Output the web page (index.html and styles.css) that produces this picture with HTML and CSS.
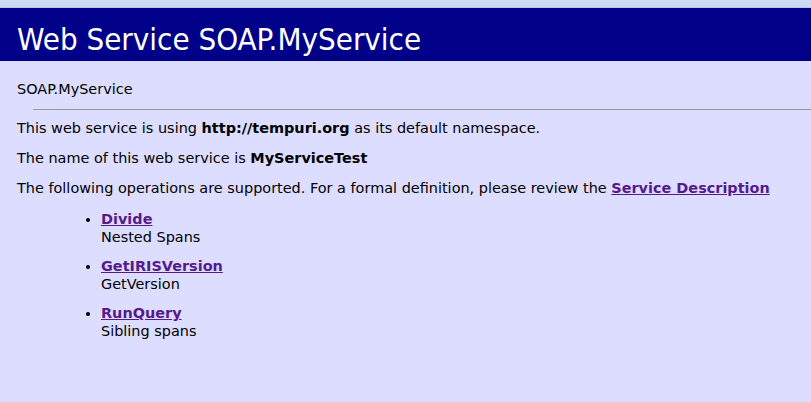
FILE: index.html
```html
<!DOCTYPE html>
<html>
<head>
<meta charset="utf-8">
<title>Web Service SOAP.MyService</title>
<link rel="stylesheet" href="styles.css">
</head>
<body>
<div class="topstrip"></div>
<div class="header"><h1 class="title">Web Service SOAP.MyService</h1></div>
<div class="content">
  <p class="cls">SOAP.MyService</p>
  <hr class="rule">
  <p class="para">This web service is using <b>http://tempuri.org</b> as its default namespace.</p>
  <p class="para">The name of this web service is <b>MyServiceTest</b></p>
  <p class="para">The following operations are supported. For a formal definition, please review the <a class="link" href="#">Service Description</a></p>
  <ul class="ops">
    <li class="op"><a class="link" href="#">Divide</a><br>Nested Spans</li>
    <li class="op"><a class="link" href="#">GetIRISVersion</a><br>GetVersion</li>
    <li class="op"><a class="link" href="#">RunQuery</a><br>Sibling spans</li>
  </ul>
</div>
</body>
</html>
```
FILE: styles.css
```css
html, body {
  margin: 0;
  padding: 0;
}
body {
  background: #ddddff;
  font-family: "DejaVu Sans", Verdana, sans-serif;
  font-size: 14.45px;
  line-height: 18px;
  color: #000;
}
.topstrip {
  height: 7px;
  background: #c9dcf4;
  border-bottom: 1px solid #b6c8ea;
}
.header {
  background: #000088;
  height: 53px;
  padding: 0 17px;
  display: flex;
  align-items: center;
}
.title {
  margin: 8px 0 0 0;
  color: #fff;
  font-family: "DejaVu Sans Condensed", "DejaVu Sans", sans-serif;
  font-weight: normal;
  font-size: 31px;
  line-height: 40px;
}
.content {
  padding-left: 17px;
}
.cls {
  margin: 19px 0 11px 0;
}
.rule {
  margin: 0 0 9px 16px;
  border: 0;
  border-top: 1px solid #999;
  height: 0;
}
.para {
  margin: 0 0 12px 0;
}
.link {
  color: #551a8b;
  font-weight: bold;
}
.ops {
  margin: 14px 0 0 0;
  padding-left: 84px;
}
.op {
  margin-bottom: 12px;
  line-height: 17.5px;
}
```
